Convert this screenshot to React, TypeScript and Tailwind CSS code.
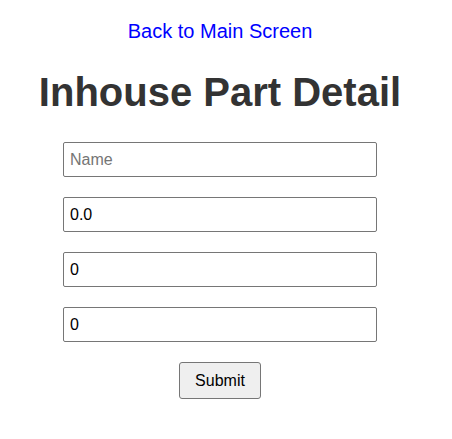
export default function App() {
  const fields = [
    { placeholder: "Name", value: "" },
    { placeholder: "Price", value: "0.0" },
    { placeholder: "Inventory", value: "0" },
    { placeholder: "Machine ID", value: "0" },
  ];

  return (
    <div className="w-[440px] bg-white pt-[20px] flex flex-col items-center font-['Liberation_Sans',Arial,sans-serif]">
      <a href="#" className="text-[20px] leading-[23px] text-[#0000ff]">
        Back to Main Screen
      </a>
      <h1 className="mt-[26px] text-[40px] leading-[46px] font-bold text-[#333333]">
        Inhouse Part Detail
      </h1>
      <form className="mt-[27px] flex flex-col items-center gap-[20px]">
        {fields.map((f) => (
          <input
            key={f.placeholder}
            type="text"
            placeholder={f.placeholder === "Name" ? "Name" : undefined}
            defaultValue={f.value}
            className="w-[314px] h-[35px] px-[6px] text-[16px] text-black border border-[#767676] rounded-[2px] placeholder:text-[#757575]"
          />
        ))}
        <button
          type="submit"
          className="w-[82px] h-[37px] text-[16px] text-black bg-[#efefef] border border-[#767676] rounded-[3px]"
        >
          Submit
        </button>
      </form>
    </div>
  );
}
